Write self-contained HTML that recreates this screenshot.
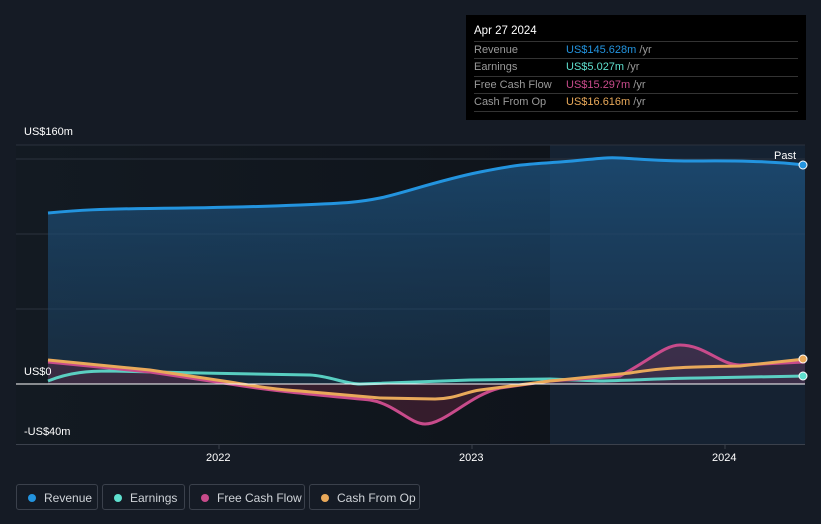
<!DOCTYPE html>
<html><head><style>
body{margin:0;width:821px;height:524px;background:#151b25;font-family:"Liberation Sans",sans-serif;overflow:hidden;position:relative}
.tt{position:absolute;left:466px;top:15px;width:340px;height:105px;background:#000;color:#fff;font-size:11px}
.tt .d{position:absolute;left:8px;top:10px;font-size:11.5px}
.row{position:absolute;left:8px;width:324px;border-top:1px solid #333;height:17px;line-height:17px;color:#9a9a9a}
.row span{position:absolute;left:92px}
.lg{position:absolute;top:484px;height:26px;border:1px solid #3b414c;border-radius:3px;color:#cfd3d8;font-size:12px;line-height:26px;box-sizing:border-box}
.lg i{position:absolute;left:11px;top:9px;width:8px;height:8px;border-radius:50%}
.lg b{font-weight:normal;position:absolute;left:27px}
.ax{position:absolute;color:#fff;font-size:11px}
</style></head><body>
<svg width="821" height="524" style="position:absolute;left:0;top:0">
<defs>
<linearGradient id="lg1" x1="0" x2="1" y1="0" y2="0"><stop offset="0" stop-color="#131a22"/><stop offset="1" stop-color="#0f141b"/></linearGradient>
<linearGradient id="rv" x1="0" x2="0" y1="0" y2="1"><stop offset="0" stop-color="#1d5380" stop-opacity=".75"/><stop offset="1" stop-color="#1d4060" stop-opacity=".45"/></linearGradient>
</defs>
<rect x="16" y="145" width="534" height="299" fill="url(#lg1)"/>
<rect x="550" y="145" width="255" height="299" fill="#152232"/>
<line x1="16" y1="145" x2="805" y2="145" stroke="#2b323d"/>
<line x1="16" y1="159" x2="805" y2="159" stroke="#2b323d"/>
<line x1="16" y1="234" x2="805" y2="234" stroke="#2b323d"/>
<line x1="16" y1="309" x2="805" y2="309" stroke="#2b323d"/>
<path d="M48,213 C80,210 100,209 150,208.5 S250,207 300,205 S360,202 380,198 S440,180 480,172 S530,164 560,162 S600,157 620,158 S660,161 690,161 S760,160 805,165 L805,384 L48,384Z" fill="url(#rv)"/>
<path d="M48,213 C80,210 100,209 150,208.5 S250,207 300,205 S360,202 380,198 S440,180 480,172 S530,164 560,162 S600,157 620,158 S660,161 690,161 S760,160 805,165" fill="none" stroke="#2394df" stroke-width="3"/>
<path d="M48,362 L150,372 L230,384 C280,392 330,396 370,400 C395,404 410,424 425,424 C445,424 470,395 500,388 L550,381 L620,376 C650,360 665,345 680,345 C705,345 720,365 740,365 L805,362 L805,384 L48,384Z" fill="#7a2a4a" fill-opacity=".35"/>
<path d="M48,381 C70,372 90,371 110,371 L200,373 L310,375 C330,376 345,384 360,384 L470,380 L550,379 L600,381 C640,380 670,378 700,378 L805,376" fill="none" stroke="#5fe0cf" stroke-width="3" opacity=".9"/>
<path d="M48,362 L150,372 L230,384 C280,392 330,396 370,400 C395,404 410,424 425,424 C445,424 470,395 500,388 L550,381 L620,376 C650,360 665,345 680,345 C705,345 720,365 740,365 L805,362" fill="none" stroke="#c84b8b" stroke-width="3"/>
<path d="M48,360 L150,370 L230,382 C260,387 280,390 300,391 L380,398 L435,399 C455,399 465,392 480,390 L550,381 L630,373 C660,368 680,367 740,366 L805,359" fill="none" stroke="#e9a95a" stroke-width="3"/>
<line x1="16" y1="384" x2="805" y2="384" stroke="#fff" stroke-width="1"/>
<line x1="16" y1="444.5" x2="805" y2="444.5" stroke="#3b414c"/>
<line x1="219" y1="444" x2="219" y2="449" stroke="#3b414c"/>
<line x1="472" y1="444" x2="472" y2="449" stroke="#3b414c"/>
<line x1="725" y1="444" x2="725" y2="449" stroke="#3b414c"/>
<circle cx="803" cy="165" r="4" fill="#2394df" stroke="#fff" stroke-width="1"/>
<circle cx="803" cy="376" r="4" fill="#5fe0cf" stroke="#fff" stroke-width="1"/>
<circle cx="803" cy="359" r="4" fill="#e9a95a" stroke="#fff" stroke-width="1"/>
</svg>
<div class="ax" style="left:24px;top:126px">US$160m</div>
<div class="ax" style="left:24px;top:366px">US$0</div>
<div class="ax" style="left:24px;top:426px">-US$40m</div>
<div class="ax" style="left:774px;top:150px">Past</div>
<div class="ax" style="left:206px;top:452px">2022</div>
<div class="ax" style="left:459px;top:452px">2023</div>
<div class="ax" style="left:712px;top:452px">2024</div>
<div class="tt"><div class="d">Apr 27 2024</div>
<div class="row" style="top:26px">Revenue<span><em style="font-style:normal;color:#2394df">US$145.628m</em> /yr</span></div>
<div class="row" style="top:43px">Earnings<span><em style="font-style:normal;color:#5fe0cf">US$5.027m</em> /yr</span></div>
<div class="row" style="top:61px">Free Cash Flow<span><em style="font-style:normal;color:#c84b8b">US$15.297m</em> /yr</span></div>
<div class="row" style="top:78px;border-bottom:1px solid #333">Cash From Op<span><em style="font-style:normal;color:#e9a95a">US$16.616m</em> /yr</span></div>
</div>
<div class="lg" style="left:16px;width:82px"><i style="background:#2394df"></i><b>Revenue</b></div>
<div class="lg" style="left:102px;width:83px"><i style="background:#5fe0cf"></i><b>Earnings</b></div>
<div class="lg" style="left:189px;width:116px"><i style="background:#c84b8b"></i><b>Free Cash Flow</b></div>
<div class="lg" style="left:309px;width:111px"><i style="background:#e9a95a"></i><b>Cash From Op</b></div>
</body></html>
